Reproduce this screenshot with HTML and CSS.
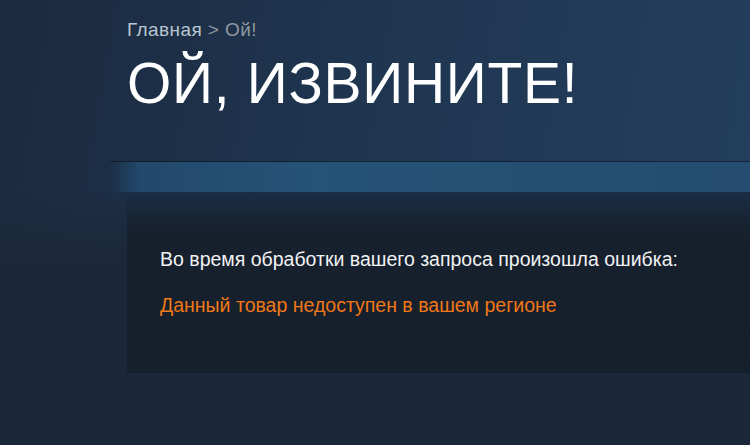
FILE: index.html
```html
<!DOCTYPE html>
<html lang="ru">
<head>
<meta charset="utf-8">
<link rel="stylesheet" href="styles.css">
</head>
<body>
<div class="page">
  <div class="header">
    <div class="breadcrumbs"><a class="crumb">Главная</a><span class="sep"> &gt; </span><span class="current">Ой!</span></div>
    <h1 class="title">ОЙ, ИЗВИНИТЕ!</h1>
  </div>
  <div class="stripe"></div>
  <div class="panel">
    <p class="msg">Во время обработки вашего запроса произошла ошибка:</p>
    <p class="error">Данный товар недоступен в вашем регионе</p>
  </div>
</div>
</body>
</html>
```
FILE: styles.css
```css
html, body {
  margin: 0;
  padding: 0;
  height: 100%;
}
body {
  font-family: "Liberation Sans", Arial, sans-serif;
  background: #1b2839;
  overflow: hidden;
}
.page {
  width: 750px;
  height: 445px;
  background:
    linear-gradient(to bottom, rgba(27,40,57,0) 0, rgba(27,40,57,0) 190px, #1b2839 260px),
    linear-gradient(100deg, #1b2a3f 0%, #1f3550 45%, #24405e 100%);
}
.header {
  padding: 19px 0 0 127px;
  height: 144px;
  box-sizing: border-box;
}
.breadcrumbs {
  font-size: 19px;
  line-height: 22px;
  color: #8f98a0;
  letter-spacing: 0.4px;
}
.crumb {
  color: #b8c4cf;
}
.title {
  margin: 11px 0 0 0;
  font-weight: normal;
  font-size: 57px;
  line-height: 62px;
  color: #ffffff;
  letter-spacing: 0.7px;
}
.stripe {
  margin-top: 18px;
  margin-left: 110px;
  height: 30px;
  background: linear-gradient(to right, rgba(36,80,115,0) 0, #22496c 30px, #255377 200px, #244d70 100%);
  box-shadow: 0 -1px 0 rgba(10,20,35,0.6);
}
.panel {
  margin-left: 127px;
  height: 181px;
  box-sizing: border-box;
  padding: 56px 0 0 33px;
  background: linear-gradient(to bottom, #1a2d45 0, #17202d 40px, #161f2c 100%);
}
.msg {
  margin: 0;
  font-size: 19.5px;
  line-height: 22px;
  color: #f1f2f3;
}
.error {
  margin: 24px 0 0 0;
  font-size: 19.5px;
  line-height: 22px;
  color: #f07716;
}
```
